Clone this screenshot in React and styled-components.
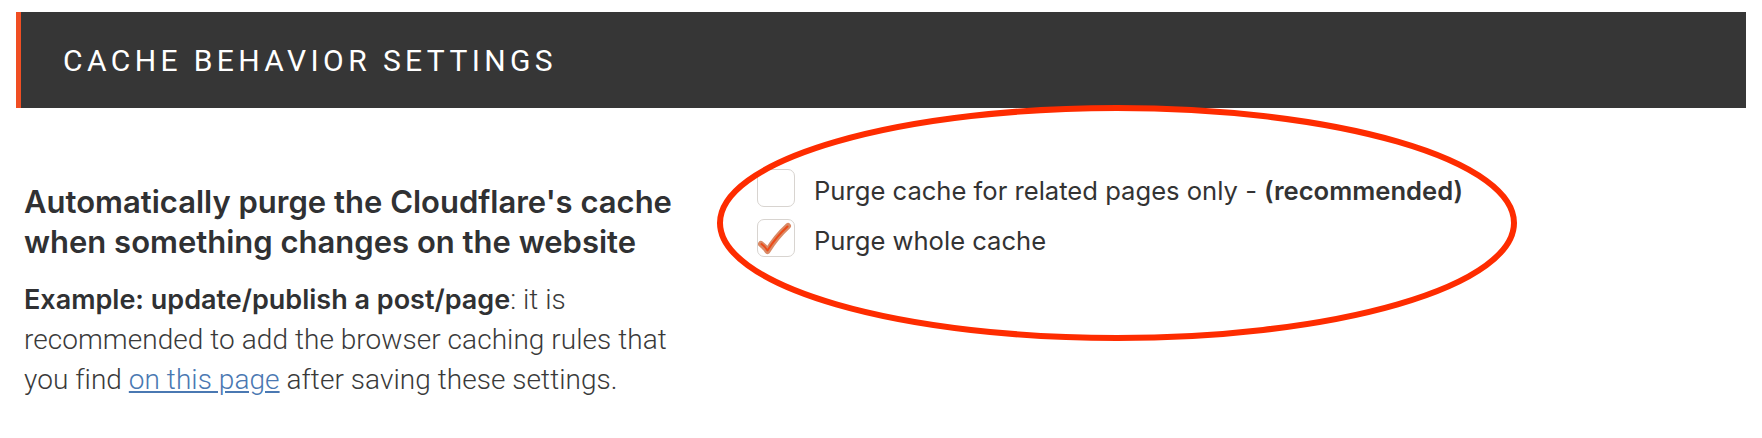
import React from "react";
import styled, { createGlobalStyle } from "styled-components";

const GlobalStyle = createGlobalStyle`
  body {
    margin: 0;
    background: #fff;
    font-family: Inter, Roboto, "Liberation Sans", sans-serif;
    color: #333;
  }
`;

const Page = styled.div`
  position: relative;
  padding: 12px 16px 0 16px;
  height: 426px;
  overflow: hidden;
`;

const SectionHeader = styled.div`
  height: 96px;
  display: flex;
  align-items: center;
  padding-left: 42px;
  background: #363636;
  border-left: 5px solid #f04e23;
`;

const SectionTitle = styled.h2`
  margin: 0;
  color: #fff;
  font-family: Roboto, "Liberation Sans", sans-serif;
  font-size: 30px;
  font-weight: 400;
  letter-spacing: 4.4px;
`;

const SettingRow = styled.div`
  display: grid;
  grid-template-columns: 665px 1fr;
  column-gap: 68px;
  padding: 61px 8px 0 8px;
`;

const Description = styled.div`
  padding-top: 13px;
`;

const SettingTitle = styled.h3`
  margin: 0 0 18px;
  font-size: 31px;
  line-height: 40px;
  font-weight: 600;
  color: #303133;
`;

const Help = styled.p`
  margin: 0;
  font-family: Roboto, "Liberation Sans", sans-serif;
  font-size: 28px;
  line-height: 40px;
  font-weight: 300;
  letter-spacing: 0.05px;
  color: #3a3a3a;

  strong {
    font-family: Inter, Roboto, sans-serif;
    font-size: 27px;
    font-weight: 600;
    letter-spacing: 0;
    color: #303133;
  }

  a {
    color: #4a78b2;
    text-decoration: underline;
  }
`;

const Options = styled.div`
  display: flex;
  flex-direction: column;
  gap: 12px;
`;

const Option = styled.label`
  display: flex;
  align-items: center;
  gap: 19px;
  height: 38px;
  font-size: 25.6px;
  line-height: 32px;
  color: #333;

  strong {
    font-weight: 600;
  }
`;

const Box = styled.span`
  position: relative;
  flex: none;
  width: 38px;
  height: 38px;
  box-sizing: border-box;
  border: 1.5px solid #d8d4d0;
  border-radius: 7px;
  background: #fff;
`;

const LabelText = styled.span`
  padding-top: 6px;
`;

const Mark = styled.svg`
  position: absolute;
  left: 0;
  top: 0;
`;

const Highlight = styled.svg`
  position: absolute;
  left: 715px;
  top: 102px;
  pointer-events: none;
`;

function Check() {
  return (
    <Mark width="38" height="38" viewBox="0 0 38 38">
      <path
        d="M3 24 Q6 26 9.5 31 Q18 17 30 6"
        fill="none"
        stroke="#d98a66"
        strokeWidth="6"
        strokeLinecap="round"
        strokeLinejoin="round"
      />
      <path
        d="M3.5 24 Q6.5 26 9.5 30.5 Q18 17 29.5 6.5"
        fill="none"
        stroke="#ec4a17"
        strokeWidth="2"
        strokeLinecap="round"
        strokeLinejoin="round"
      />
    </Mark>
  );
}

function Checkbox({ checked }) {
  return <Box>{checked && <Check />}</Box>;
}

export default function App() {
  return (
    <>
      <GlobalStyle />
      <Page>
        <SectionHeader>
          <SectionTitle>CACHE BEHAVIOR SETTINGS</SectionTitle>
        </SectionHeader>
        <SettingRow>
          <Description>
            <SettingTitle>
              Automatically purge the Cloudflare's cache when something changes on the website
            </SettingTitle>
            <Help>
              <strong>Example: update/publish a post/page</strong>: it is recommended to add the
              browser caching rules that you find <a href="#">on this page</a> after saving these
              settings.
            </Help>
          </Description>
          <Options>
            <Option>
              <Checkbox />
              <LabelText>
                Purge cache for related pages only - <strong>(recommended)</strong>
              </LabelText>
            </Option>
            <Option>
              <Checkbox checked />
              <LabelText>Purge whole cache</LabelText>
            </Option>
          </Options>
        </SettingRow>
        <Highlight width="804" height="244" viewBox="0 0 804 244">
          <ellipse
            cx="402"
            cy="121"
            rx="397"
            ry="115"
            fill="none"
            stroke="#fe2c00"
            strokeWidth="6"
          />
        </Highlight>
      </Page>
    </>
  );
}
